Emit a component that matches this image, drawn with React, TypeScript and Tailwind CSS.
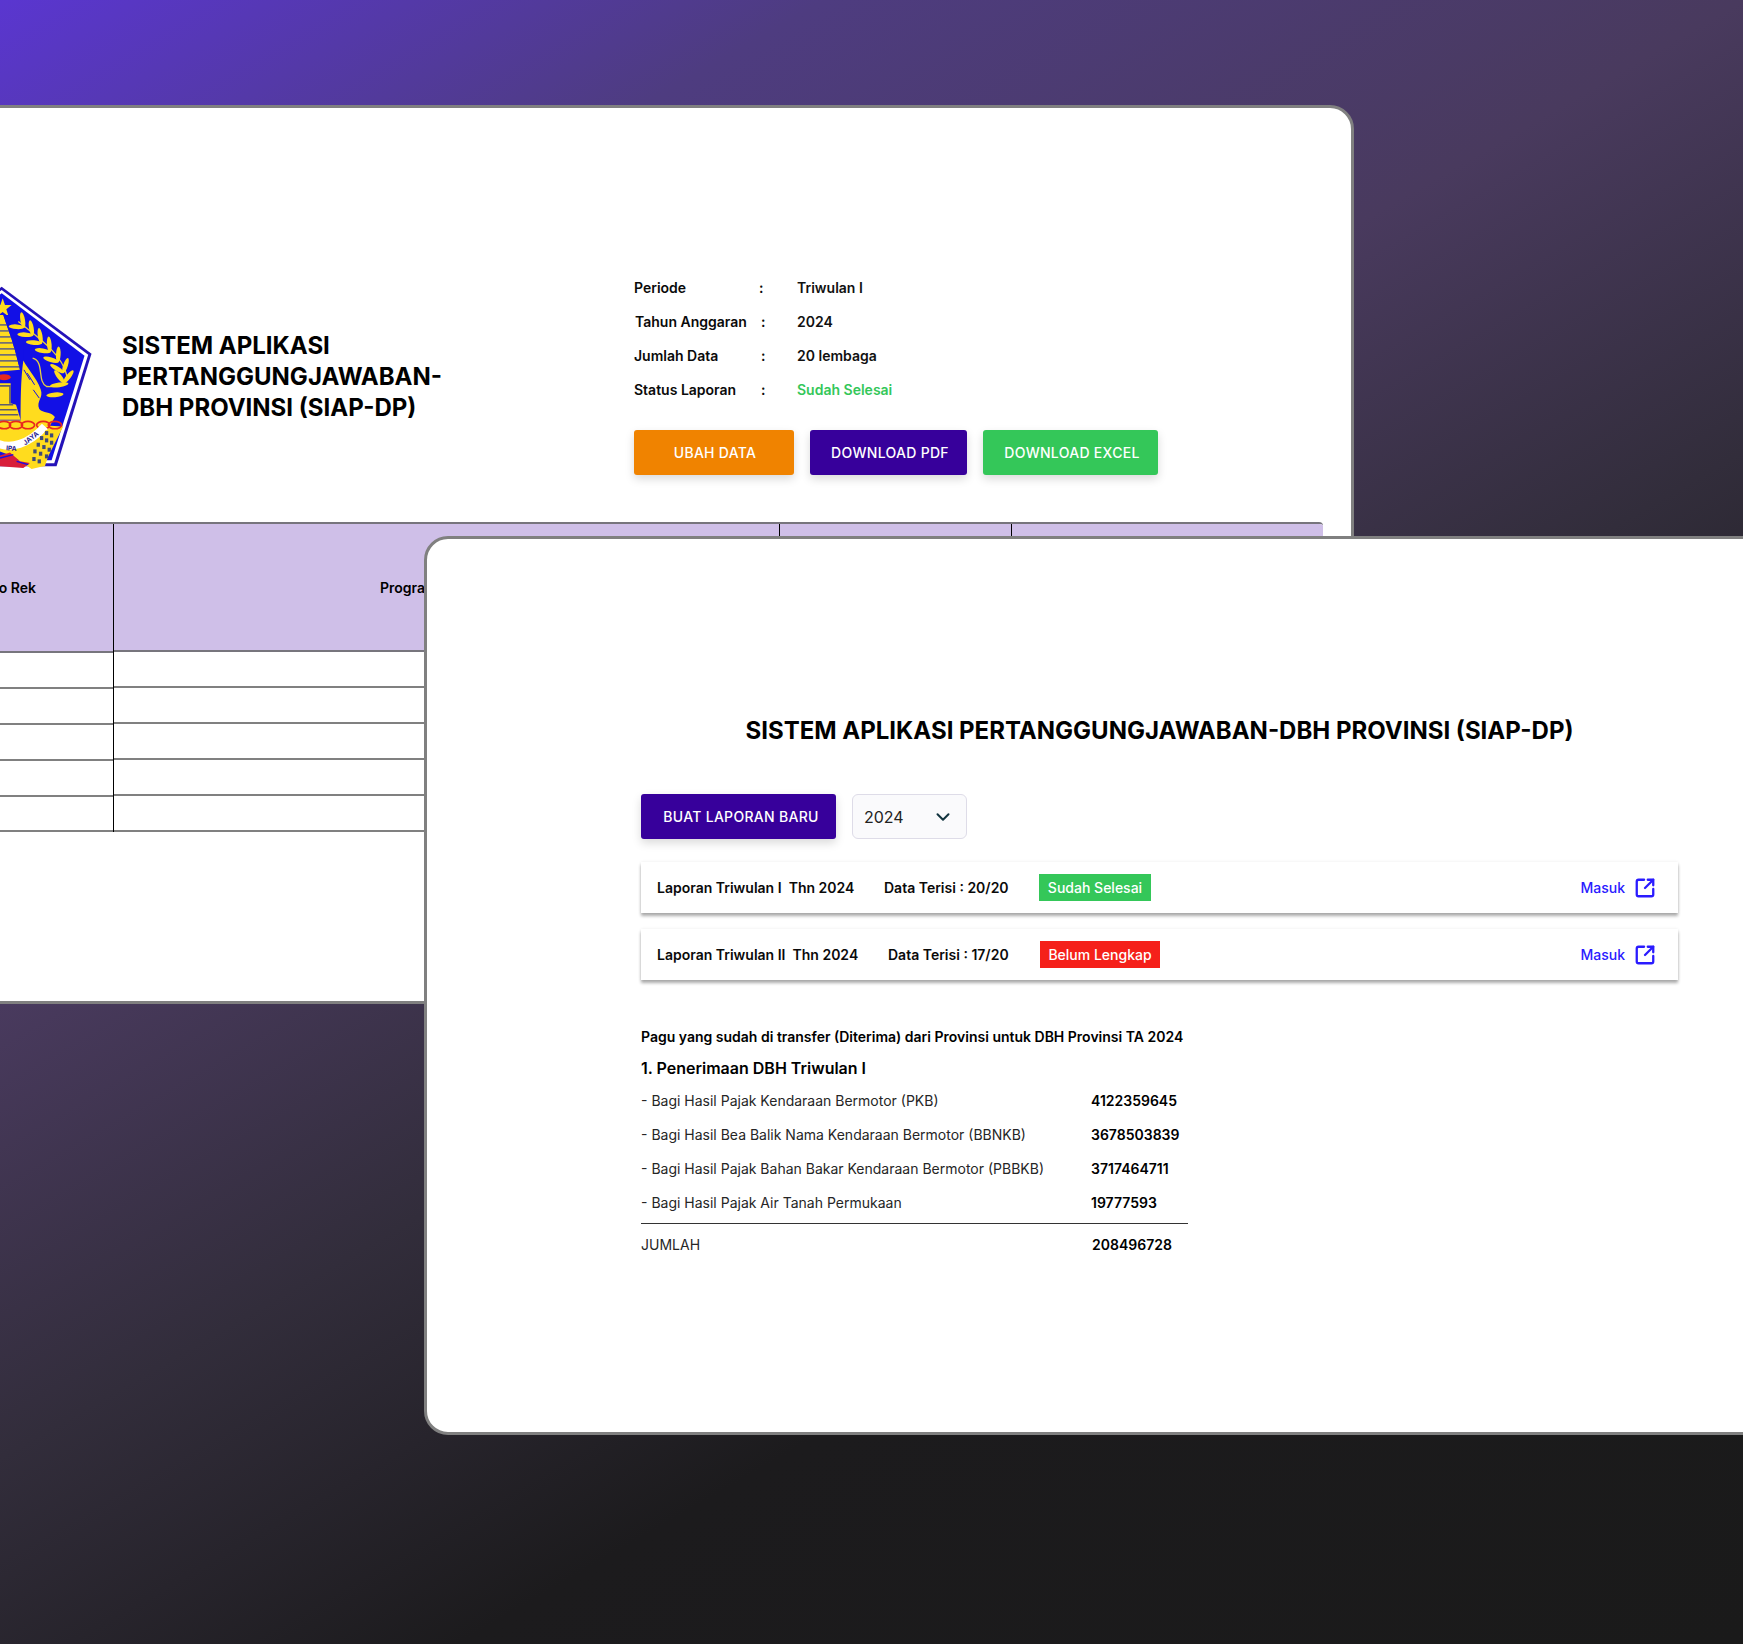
import React from 'react';
import { ChevronDown, SquareArrowOutUpRight } from 'lucide-react';

const details = [
  { label: 'Periode', value: 'Triwulan I', labelClass: 'w-[125px]', colonClass: 'w-[38px]', valueClass: 'text-[#111]' },
  { label: 'Tahun Anggaran', value: '2024', labelClass: 'w-[126px] pl-px', colonClass: 'w-[37px] pl-px', valueClass: 'text-[#111]' },
  { label: 'Jumlah Data', value: '20 lembaga', labelClass: 'w-[126px]', colonClass: 'w-[37px] pl-px', valueClass: 'text-[#111]' },
  { label: 'Status Laporan', value: 'Sudah Selesai', labelClass: 'w-[126px]', colonClass: 'w-[37px] pl-px', valueClass: 'text-[#34c759]' },
];

const laporan = [
  { title: 'Laporan Triwulan I  Thn 2024', data: 'Data Terisi : 20/20', status: 'Sudah Selesai', badge: 'bg-[#34c759] w-[112px]', gap: 'w-[227px]', gap2: 'w-[155px]' },
  { title: 'Laporan Triwulan II  Thn 2024', data: 'Data Terisi : 17/20', status: 'Belum Lengkap', badge: 'bg-[#f5201a] w-[120px]', gap: 'w-[231px]', gap2: 'w-[152px]' },
];

const penerimaan = [
  { name: '- Bagi Hasil Pajak Kendaraan Bermotor (PKB)', amount: '4122359645' },
  { name: '- Bagi Hasil Bea Balik Nama Kendaraan Bermotor (BBNKB)', amount: '3678503839' },
  { name: '- Bagi Hasil Pajak Bahan Bakar Kendaraan Bermotor (PBBKB)', amount: '3717464711' },
  { name: '- Bagi Hasil Pajak Air Tanah Permukaan', amount: '19777593' },
];

// laurel nodes along the stem: x, y, direction of the stem in degrees
const laurel = [
  [72, 172, 42], [98, 196, 42], [124, 220, 43], [150, 246, 47], [174, 276, 55], [190, 308, 70], [192, 338, 90],
];

function Logo() {
  return (
    <svg viewBox="-285 0 570 640" className="w-[190px] h-[213px] shrink-0">
      <polygon points="5,50 275,252 170,590 -160,590 -265,252" fill="#2412b8" />
      <polygon points="5,60 265,255 163,581 -153,581 -255,255" fill="#ffffff" />
      <polygon points="5,70 254,258 155,572 -145,572 -244,258" fill="#1210e6" />
      <polygon points="8,85 15,105 35,105 19,118 26,140 8,126 -10,140 -3,118 -19,105 1,105" fill="#ffdc1e" />
      <polygon points="0,135 10,135 20,165 34,205 46,245 60,300 0,305" fill="#ffdc1e" />
      {[165, 183, 201, 219, 237, 255, 273, 291].map(y => (
        <line key={y} x1="0" x2="60" y1={y} y2={y} stroke="#6d6a78" strokeWidth="5" />
      ))}
      <polygon points="10,135 20,165 34,205 46,245 60,300 70,305 70,135" fill="#1210e6" />
      <ellipse cx="12" cy="322" rx="20" ry="9" fill="#e8281e" />
      <polygon points="0,340 32,340 32,400 48,405 62,450 0,450" fill="#ffdc1e" />
      <path d="M0 348H30V402M0 405H40M0 420H50M0 435H55" fill="none" stroke="#5f5c6c" strokeWidth="5" />
      <path d="M70 272C85 300 110 325 122 358C132 385 108 392 118 418C130 432 150 424 165 442L150 468L190 470L130 590L95 598L40 560L0 545V452H62C62 400 62 330 70 272Z" fill="#ffdc1e" />
      <path d="M72 300L90 330M82 310L104 345M100 360L118 385" stroke="#1210e6" strokeWidth="3" />
      <path d="M55 155C110 200 185 250 200 315C205 345 175 352 140 350C110 335 135 275 98 265" fill="none" stroke="#e6cf40" strokeWidth="4" />
      {laurel.map(([x, y, a]) =>
        [-38, 38].map(turn => {
          const dir = ((a + 180 + turn) * Math.PI) / 180;
          const cx = x + Math.cos(dir) * 22;
          const cy = y + Math.sin(dir) * 22;
          return (
            <ellipse key={`${x}-${turn}`} cx={cx} cy={cy} rx="24" ry="7" fill="#ffdc1e" transform={`rotate(${a + turn} ${cx} ${cy})`} />
          );
        })
      )}
      <ellipse cx="178" cy="345" rx="28" ry="7" fill="#ffdc1e" transform="rotate(-8 178 345)" />
      <ellipse cx="165" cy="375" rx="26" ry="7" fill="#ffdc1e" transform="rotate(-5 165 375)" />
      {[12, 48, 84, 130, 165].map(x => (
        <ellipse key={x} cx={x} cy="466" rx="20" ry="11" fill="none" stroke="#e8281e" strokeWidth="5" />
      ))}
      <path d="M-20 515C30 545 90 520 135 470" fill="none" stroke="#ffffff" strokeWidth="24" />
      <text x="18" y="542" fontSize="20" fontWeight="700" fill="#26208c" transform="rotate(4 18 542)">IPA</text>
      <text x="76" y="527" fontSize="20" fontWeight="700" fill="#26208c" transform="rotate(-38 76 527)">JAYA</text>
      <path d="M-10 560L30 548L60 575L90 580L70 595L0 590Z" fill="#d81e3a" />
      <path d="M0 565L40 555M50 575L85 585" stroke="#1210e6" strokeWidth="4" />
      <polygon points="138,480 165,495 135,590 98,590 90,560" fill="#ffdc1e" />
      {[[140, 490], [155, 497], [125, 505], [140, 512], [155, 519], [115, 525], [132, 532], [148, 540], [105, 545], [122, 552], [140, 560], [102, 568], [118, 575]].map(([x, y]) => (
        <rect key={`${x}-${y}`} x={x - 5} y={y - 6} width="10" height="12" fill="#3e4a78" />
      ))}
    </svg>
  );
}

function ActionButton({ label, className }: { label: string; className: string }) {
  return (
    <button className={`h-[45px] rounded-[3px] text-white text-[14px] font-medium tracking-[0.3px] shadow-[0_4px_10px_rgba(0,0,0,0.15)] ${className}`}>
      {label}
    </button>
  );
}

function TableColumn({ width, header, headerClass, lastRow = 'h-[36px]' }: { width: string; header?: string; headerClass: string; lastRow?: string }) {
  return (
    <div className={`flex flex-col shrink-0 ${width}`}>
      <div className={`flex items-center bg-[#cfbfe8] border-b-2 border-[#77757d] ${headerClass}`}>
        {header}
      </div>
      {[0, 1, 2, 3].map(i => (
        <div key={i} className="h-[36px] border-b-2 border-[#808080]" />
      ))}
      <div className={`border-b-2 border-[#808080] ${lastRow}`} />
    </div>
  );
}

export default function App() {
  return (
    <div className="relative w-[1743px] h-[1644px] overflow-hidden font-['Inter',sans-serif] text-[#0a0a0a] bg-[linear-gradient(150deg,#5a36d0_0%,#4e3c80_18%,#493a5e_38%,#322d3b_55%,#1c1b1d_72%,#1a1a1a_100%)]">
      {/* back window */}
      <div className="absolute left-[-110px] top-[105px] w-[1464px] h-[899px] bg-white border-[3px] border-[#808080] rounded-[24px]">
        <div className="flex items-start pl-[12px] pt-[162px] h-[414px]">
          <Logo />
          <div className="ml-[27px] mt-[60px] w-[340px] text-[24px] leading-[31px] font-bold text-black">
            SISTEM APLIKASI PERTANGGUNGJAWABAN-DBH PROVINSI (SIAP-DP)
          </div>
          <div className="ml-[172px] mt-[8px] flex flex-col">
            <div className="flex flex-col gap-[14px] text-[14px] leading-[20px] font-semibold">
              {details.map(row => (
                <div key={row.label} className="flex">
                  <span className={row.labelClass}>{row.label}</span>
                  <span className={row.colonClass}>:</span>
                  <span className={row.valueClass}>{row.value}</span>
                </div>
              ))}
            </div>
            <div className="flex gap-[16px] mt-[30px]">
              <ActionButton label="UBAH DATA" className="w-[160px] pl-[2px] bg-[#f08300]" />
              <ActionButton label="DOWNLOAD PDF" className="w-[157px] pl-[3px] bg-[#37009b]" />
              <ActionButton label="DOWNLOAD EXCEL" className="w-[175px] pl-[3px] bg-[#34c759]" />
            </div>
          </div>
        </div>
        <div className="flex ml-[63px] w-[1367px] border-t-2 border-[#77757d] rounded-tr-[4px] overflow-hidden text-[14px] font-semibold text-black">
          <div className="flex w-[158px] shrink-0 border-r border-black">
            <TableColumn width="w-full" header="No Rek" headerClass="h-[129px] pl-[32px]" lastRow="h-[35px]" />
          </div>
          <div className="border-r border-black">
            <TableColumn width="w-[665px]" header="Program" headerClass="h-[128px] pl-[266px]" />
          </div>
          <div className="border-r border-black">
            <TableColumn width="w-[231px]" headerClass="h-[128px]" />
          </div>
          <TableColumn width="w-[311px]" headerClass="h-[128px]" />
        </div>
      </div>

      {/* front window */}
      <div className="absolute left-[424px] top-[536px] w-[1400px] h-[899px] bg-white border-[3px] border-[#808080] rounded-[24px] pl-[214px] pt-[175px]">
        <h1 className="w-[1037px] text-center text-[24px] leading-[34px] font-bold text-black">
          SISTEM APLIKASI PERTANGGUNGJAWABAN-DBH PROVINSI (SIAP-DP)
        </h1>
        <div className="flex gap-[16px] mt-[46px]">
          <button className="w-[195px] h-[45px] pl-[5px] rounded-[3px] bg-[#37009b] text-white text-[14px] font-medium tracking-[0.3px] shadow-[0_4px_10px_rgba(0,0,0,0.15)]">
            BUAT LAPORAN BARU
          </button>
          <div className="w-[115px] h-[45px] rounded-[6px] border border-[#dedce8] bg-[#fafafc] flex items-center justify-between pl-[11px] pr-[12px] text-[16px] text-[#222]">
            <span>2024</span>
            <ChevronDown className="w-[22px] h-[22px] text-[#12343f]" strokeWidth={2.2} />
          </div>
        </div>
        <div className="flex flex-col gap-[16px] mt-[23px] w-[1037px]">
          {laporan.map(item => (
            <div key={item.title} className="h-[51px] flex items-center bg-white pl-[16px] pr-[22px] text-[14px] font-semibold shadow-[0_3px_3px_rgba(0,0,0,0.32),0_0_3px_rgba(0,0,0,0.08)]">
              <span className={`whitespace-pre ${item.gap}`}>{item.title}</span>
              <span className={item.gap2}>{item.data}</span>
              <span className={`h-[27px] flex items-center justify-center text-white font-medium ${item.badge}`}>{item.status}</span>
              <a className="ml-auto flex items-center gap-[9px] font-medium text-[#2a1bff]">
                Masuk
                <SquareArrowOutUpRight className="w-[22px] h-[22px]" strokeWidth={2.5} />
              </a>
            </div>
          ))}
        </div>
        <div className="mt-[47px] w-[547px] text-[14px]">
          <p className="leading-[20px] font-semibold text-black">Pagu yang sudah di transfer (Diterima) dari Provinsi untuk DBH Provinsi TA 2024</p>
          <p className="mt-[9px] leading-[24px] text-[16px] font-semibold text-black">1. Penerimaan DBH Triwulan I</p>
          <div className="flex flex-col gap-[14px] mt-[11px]">
            {penerimaan.map(row => (
              <div key={row.name} className="flex leading-[20px]">
                <span className="w-[450px] text-[#262626]">{row.name}</span>
                <span className="font-semibold text-black">{row.amount}</span>
              </div>
            ))}
          </div>
          <div className="mt-[10px] border-t border-[#333]" />
          <div className="flex mt-[11px] leading-[20px]">
            <span className="w-[451px] text-[#262626]">JUMLAH</span>
            <span className="font-semibold text-black">208496728</span>
          </div>
        </div>
      </div>
    </div>
  );
}
